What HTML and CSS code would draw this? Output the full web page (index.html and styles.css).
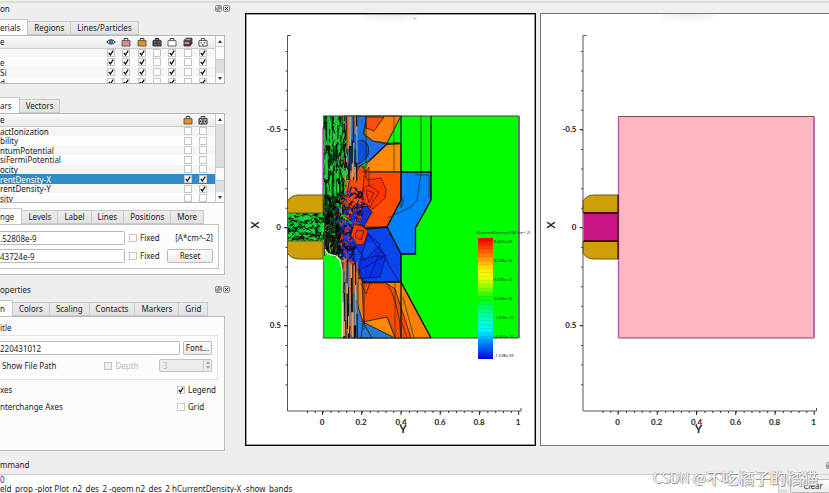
FILE: index.html
```html
<!DOCTYPE html>
<html lang="en">
<head>
<meta charset="utf-8">
<title>Plot_n2_des_2</title>
<link rel="stylesheet" href="styles.css">
</head>
<body>
<svg class="defs" aria-hidden="true">
  <defs>
    <symbol id="i-eye" viewBox="0 0 10 10"><path d="M.6 5Q5 .4 9.4 5Q5 9.2.6 5z" fill="#dce6ee" stroke="#2c4763" stroke-width="1"/><circle cx="5" cy="4.8" r="2" fill="#4f80a8" stroke="#24415f" stroke-width=".6"/></symbol>
    <symbol id="i-bag" viewBox="0 0 10 10"><path d="M3.2 3.6V1.5h3.6v2.1" fill="none" stroke="#333" stroke-width="1"/><path d="M1 3.6h8v5.4H1z" fill="currentColor" stroke="#444" stroke-width=".8"/></symbol>
    <symbol id="i-mesh" viewBox="0 0 10 10"><path d="M3.2 3.6V1.5h3.6v2.1M1 3.6h8v5.4H1z" fill="currentColor" stroke="#333" stroke-width="1"/><path d="M1 4l3 5 2-5 3 5M1 8.5l3-4.5 2 5 3-5M1 6.3h8" fill="none" stroke="#333" stroke-width=".7"/></symbol>
    <symbol id="i-box" viewBox="0 0 10 10"><path d="M1 3.5L3 1.2h6v5.6L7 9H1z" fill="#4a4448" stroke="#333" stroke-width=".8"/><path d="M1.6 5h4.6v2H1.6z" fill="#d9828c"/><path d="M2.6 2.6h4.8" stroke="#ddd" stroke-width=".7"/></symbol>
    <symbol id="i-dots" viewBox="0 0 10 10"><path d="M3.2 3.6V1.5h3.6v2.1M1 3.6h8v5.4H1z" fill="#fff" stroke="#444" stroke-width=".9"/><path d="M2.6 5.3h1.2v1.2H2.6zM6 5.3h1.2v1.2H6zM4.4 7h1.2v1.2H4.4z" fill="#333"/></symbol>
    <symbol id="i-float" viewBox="0 0 7 7"><rect x=".5" y=".5" width="6" height="6" rx="1.2" fill="#e4e4e4" stroke="#777" stroke-width=".8"/><path d="M3 1.8h2.2V4H3zM1.8 3v2.2H4" fill="none" stroke="#555" stroke-width=".7"/></symbol>
    <symbol id="i-close" viewBox="0 0 7 7"><rect x=".5" y=".5" width="6" height="6" rx="1.2" fill="#e0e0e0" stroke="#777" stroke-width=".8"/><path d="M2 2l3 3M5 2L2 5" stroke="#333" stroke-width="1"/></symbol>
    <g id="axes">
      <path d="M291 35.500h-3.500V411H521v-3" fill="none" stroke="#555" stroke-width="1"/>
      <path d="M307 412H519" stroke="#333" stroke-width="2" stroke-dasharray="1 6.840"/>
      <path d="M286.500 51V392" stroke="#444" stroke-width="2" stroke-dasharray="1 18.600"/>
      <path d="M322.500 411v4M361.700 411v4M401 411v4M440.200 411v4M479.500 411v4M518.700 411v4M287 129.500h-3M287 227.500h-3M287 325.500h-3" stroke="#333" stroke-width="1"/>
      <g class="tick" text-anchor="middle">
        <text x="322" y="425">0</text><text x="361" y="425">0.2</text><text x="401" y="425">0.4</text><text x="440" y="425">0.6</text><text x="479" y="425">0.8</text><text x="518" y="425">1</text>
      </g>
      <g class="tick" text-anchor="end">
        <text x="281" y="132">-0.5</text><text x="281" y="230">0</text><text x="281" y="328">0.5</text>
      </g>
      <text class="axis-name" x="403" y="433" text-anchor="middle">Y</text>
      <text class="axis-name" transform="translate(259 225) rotate(-90)" text-anchor="middle">X</text>
    </g>
    <path id="contacts" d="M323 195H299Q291 195 287.500 201V213H323zM323 241H287.500V253Q291 259 299 259H323z" fill="#cf9f08" stroke="#5e5a20" stroke-width="1"/>
  </defs>
</svg>

<div class="toolbar-edge"></div>
<main class="workspace">
  <aside class="sidebar">
    <header class="dock-title"><span>on</span><span class="dock-buttons"><button aria-label="Float"><svg><use href="#i-float"/></svg></button><button aria-label="Close"><svg><use href="#i-close"/></svg></button></span></header>
    <nav class="tabs"><button class="active">erials</button><button>Regions</button><button>Lines/Particles</button></nav>
    <section class="list materials">
      <div class="list-view">
      <table>
        <colgroup><col class="c-name"><col><col><col><col><col><col><col><col class="c-end"></colgroup>
        <thead><tr><th>e</th><th><svg><use href="#i-eye"/></svg></th><th class="pink"><svg><use href="#i-bag"/></svg></th><th class="amber"><svg><use href="#i-bag"/></svg></th><th class="dark"><svg><use href="#i-mesh"/></svg></th><th class="white"><svg><use href="#i-bag"/></svg></th><th><svg><use href="#i-box"/></svg></th><th><svg><use href="#i-dots"/></svg></th><th></th></tr></thead>
        <tbody id="materials"></tbody>
      </table>
      </div>
      <div class="scroll"><i class="up"></i><span class="thumb"></span><span class="trough"></span><i class="down"></i></div>
    </section>

    <nav class="tabs second"><button class="active">ars</button><button>Vectors</button></nav>
    <section class="list scalars">
      <div class="list-view">
      <table>
        <colgroup><col class="c-wide"><col><col><col class="c-end"></colgroup>
        <thead><tr><th>e</th><th class="amber"><svg><use href="#i-bag"/></svg></th><th class="white"><svg><use href="#i-mesh"/></svg></th><th></th></tr></thead>
        <tbody id="scalars"></tbody>
      </table>
      </div>
      <div class="scroll"><i class="up"></i><span class="trough"></span><span class="thumb"></span><span class="rest"></span><i class="down"></i></div>
    </section>
    <section class="pane range">
      <nav class="tabs"><button class="active">nge</button><button>Levels</button><button>Label</button><button>Lines</button><button>Positions</button><button>More</button></nav>
      <div class="range-body">
        <input type="text" value=".52808e-9" aria-label="Minimum">
        <label><input type="checkbox">Fixed</label>
        <span class="unit">[A*cm^-2]</span>
        <input type="text" value="43724e-9" aria-label="Maximum">
        <label><input type="checkbox">Fixed</label>
        <button class="btn">Reset</button>
      </div>
    </section>

    <header class="dock-title second"><span>operties</span><span class="dock-buttons"><button aria-label="Float"><svg><use href="#i-float"/></svg></button><button aria-label="Close"><svg><use href="#i-close"/></svg></button></span></header>
    <nav class="tabs"><button class="active">n</button><button>Colors</button><button>Scaling</button><button>Contacts</button><button>Markers</button><button>Grid</button></nav>
    <section class="pane props">
      <label for="title">itle</label>
      <div class="group">
        <div class="row"><input id="title" type="text" value="220431012"><button class="btn font">Font...</button></div>
        <div class="row path"><span class="show">Show File Path</span><label class="off"><input type="checkbox" disabled>Depth</label><span class="spin"><input type="text" value="3" disabled aria-label="Depth value"><span class="steps"><i class="up"></i><i class="down"></i></span></span></div>
      </div>
      <div class="option"><span>xes</span><label><input type="checkbox" checked>Legend</label></div>
      <div class="option"><span>nterchange Axes</span><label><input type="checkbox">Grid</label></div>
    </section>
  </aside>

  <section class="plots">
    <figure class="plot selected">
      <svg viewBox="246 14 289 431">
        <defs>
          <radialGradient id="veil" cx=".5" cy="0" r=".8"><stop offset="0" stop-color="#ececec"/><stop offset="1" stop-color="#fff"/></radialGradient>
          <linearGradient id="legend" x2="0" y2="1"><stop offset="0" stop-color="#f00000"/><stop offset=".08" stop-color="#ff4000"/><stop offset=".16" stop-color="#ff8c00"/><stop offset=".25" stop-color="#ffe600"/><stop offset=".32" stop-color="#f4ff00"/><stop offset=".42" stop-color="#80ff00"/><stop offset=".5" stop-color="#00ff00"/><stop offset=".58" stop-color="#00ff60"/><stop offset=".68" stop-color="#00ffc8"/><stop offset=".77" stop-color="#00f4ff"/><stop offset=".86" stop-color="#0090ff"/><stop offset=".94" stop-color="#0040f4"/><stop offset="1" stop-color="#0000e8"/></linearGradient>
          <clipPath id="c-left"><path d="M323 116H345L348 165 345 200 344 240 341 262 335 257 328 254 323 246z"/></clipPath>
          <clipPath id="c-gate"><path d="M288 213H325V241H288z"/></clipPath>
          <clipPath id="c-core"><path d="M325 210L340 198 352 186 362 190 366 205 360 222 363 240 354 250 355 266 346 262 330 252 325 235z"/></clipPath>
        </defs>
        <path d="M364 14H418V26H364z" fill="url(#veil)"/><circle cx="414.500" cy="18.500" r="1.200" fill="#ccc"/>
        <path d="M323 116H519V338H323z" fill="#00ff00"/>
        <g stroke="#102010" stroke-width=".8">
          <path d="M343 116H360V200H343z" fill="#d96a30"/>
          <path d="M341 256H362V338H341z" fill="#c98a58"/>
          <path d="M356 116H367L363 134 373 141 387 144 369 161 358 167 349 174 350 150z" fill="#1c70e8"/>
          <path d="M367 116H401L387 143 373 141 364 134z" fill="#ff7d08"/>
          <path d="M366 117H384L374 131 366 128z" fill="#ff4d10"/>
          <path d="M387 144H401V172H361L369 161z" fill="#ff8a08"/>
          <path d="M361 165L367 172H401V200L387 227 365 229 344 216 349 182z" fill="#ff4c00"/>
          <path d="M401 172H431V200L415.500 228V254H401L387 227 401 200z" fill="#0080ff"/>
          <path d="M365 227L387 227 401 254V282H362L354 265 338 252 340 222z" fill="#0a45ec"/>
          <path d="M358 268L362 282H401L431 338H358z" fill="#ff8000"/>
          <path d="M362 283H386L395 289 411 338H395L387 317 364 327z" fill="#ff4b00"/>
          <path d="M356 300L363 322 372 338H354zM363 322L397 338H361z" fill="#2878d8"/>
          <path d="M363 322L387 317 395 338z" fill="#ff8a08"/>
          <path d="M353 155Q354 139 363 140 371 145 368 155 362 165 355 164z" fill="#1050d0"/>
        </g>
        <path d="M401 116V200L387 227 401 254H415.500V228L431 200V116M401 172H431M401 254V282L431 338M362 282H401V338M387 144L401 143M365 229L387 227M369 161L387 144" fill="none" stroke="#111" stroke-width="1.300"/>
        <path d="M421 116V172L417 200 411 207 387 218M394 116V172M395 282V338M401 143H387L401 116M361 172H401M416 172V175H429V198M403 297L414 338M401 302V320L407 338M401 197V208L403 202V197" fill="none" stroke="#20300f" stroke-width=".7"/>
        <path d="M364 175L367 180 381 178 386 190 385 198 373 209 362 202zM364 188L369 185 379 192 370 207 361 199zM366 190L374 193 369 203zM363 165L365 174 369 167 369 187" fill="#ff2a08" fill-opacity=".6" stroke="#5e1400" stroke-width=".8"/>
        <path d="M355 208L367 206 372 212 364 226 350 221z" fill="#1030d8" stroke="#080830" stroke-width=".8"/>
        <path d="M368 234L382 253 386 255 380 277 359 279 360 261zM361 260L376 256 385 256 360 270 365 279M379 253L370 277M366 232L378 242 391 269 399 281M352 241L365 260 381 244" fill="#0820e0" fill-opacity=".5" stroke="#081068" stroke-width=".7"/>
        <path d="M366 116V178M356.500 116V182M364 283V330M361 283L366 294 370 283M386 282Q399 300 401 338M357 270Q364 285 371 282" fill="none" stroke="#222" stroke-width=".8"/>
        <g id="noise" fill="none" stroke-linejoin="round"></g>
        <path d="M354 224L362 226 368 231 364 244 357 245 351 235zM357 230l7 1-3 9-6-3z" fill="#ff3808" stroke="#401010" stroke-width=".8"/>
        <path d="M324 250L328 255 337 258 341 266V338H325z" fill="#00ff10"/>
        <path d="M325 249L328 254 336 256 340 260 342 270V338" fill="none" stroke="#e8ffe8" stroke-width="1.300"/>
        <path d="M323 128V195M323.500 262V338" stroke="#b040b8" stroke-width="1.300"/>
        <path d="M323 116H519V338H323M324.500 195V256" fill="none" stroke="#304030" stroke-width="1"/>
        <path d="M519 116V338" stroke="#75607a" stroke-width="1.500"/>
        <use href="#contacts"/>
        <use href="#axes"/>
        <path d="M478 238H493V359H478z" fill="url(#legend)"/>
        <path d="M485.500 240V359" stroke="#000" stroke-opacity=".07" stroke-width="15" stroke-dasharray="1 3"/>
        <text class="legend-title" x="476" y="234">hCurrentDensity-X (A*cm^-2)</text>
        <g class="legend-value"><text x="494" y="243">6.437e-09</text><text x="494" y="262">6.508e-10</text><text x="494" y="281">5.690e-12</text><text x="494" y="300">6.656e-13</text><text x="494" y="319">-1.526e-12</text><text x="494" y="338">-4.350e-10</text><text x="494" y="357">-1.528e-09</text></g>
      </svg>
    </figure>
    <figure class="plot">
      <svg viewBox="541 14 288 431">
        <path d="M662 14H716V25H662z" fill="url(#veil)"/>
        <path d="M618.500 116.500H814V338H618.500z" fill="#ffb6c1" stroke="#7e4a58" stroke-width="1"/>
        <path d="M618.500 116V338M814 116V338" stroke="#b55ab8" stroke-width="1.500"/>
        <g transform="translate(295.500 0)">
          <path d="M288 213H323V241H288z" fill="#c71585"/>
          <use href="#contacts"/>
          <path d="M288 213H323M288 241H323" stroke="#500018" stroke-width="2"/>
          <path d="M322.500 195V259" stroke="#501830" stroke-width="1.500"/>
          <use href="#axes"/>
        </g>
      </svg>
    </figure>
  </section>
</main>

<footer class="console">
  <header class="console-title"><span>mmand</span><button aria-label="Float"><svg><use href="#i-float"/></svg></button></header>
  <div class="console-body">
    <div class="log"><div class="result">0</div><div>eld_prop -plot Plot_n2_des_2 -geom n2_des_2 hCurrentDensity-X -show_bands</div></div>
    <div class="scroll"><i class="up"></i><span class="trough"></span></div>
    <button class="btn clear">Clear</button>
  </div>
  <div class="watermark"><span>CSDN @</span>不吃橘子的橘猫</div>
</footer>
<script src="app.js"></script>
</body>
</html>
```
FILE: styles.css
```css
* { box-sizing: border-box; }
body {
  margin: 0;
  min-height: 100vh;
  display: flex;
  flex-direction: column;
  overflow: hidden;
  background: #eeeeee;
  color: #222;
  font: 8px/10px "Noto Sans", "Noto Sans CJK SC", sans-serif;
}
button, input { font: inherit; color: inherit; }
button { padding: 0; border: 0; background: none; }
label { display: flex; align-items: center; gap: 3px; }
.defs { position: absolute; width: 0; height: 0; }

.toolbar-edge { height: 3px; border-bottom: 2px solid #dcdedc; }
.workspace { display: grid; grid-template-columns: 245px 1fr; }
.sidebar { padding-right: 20px; }

.dock-title { display: flex; justify-content: space-between; align-items: center; height: 11px; margin-bottom: 5px; }
.dock-title.second { margin-top: 9px; }
.dock-buttons { display: flex; gap: 1px; margin-right: -5px; }
.dock-buttons button, .dock-buttons svg, .console-title svg { display: block; width: 7px; height: 7px; }

.tabs { display: flex; align-items: flex-end; height: 16px; }
.tabs.second { margin-top: 13px; }
.tabs button {
  height: 14px;
  padding: 0 6px;
  border: 1px solid #c8c8c8;
  border-left: 0;
  background: linear-gradient(#ececec, #e2e2e2);
}
.tabs button.active { height: 16px; padding: 0 7px 0 0; border-bottom: 0; background: #fcfcfc; }

.list { display: flex; border: 1px solid #b8b8b8; border-left: 0; background: #fdfdfd; overflow: hidden; }
.materials { height: 49px; }
.scalars { height: 90px; }
.list-view { flex: 1; overflow: hidden; }
table { width: 100%; table-layout: fixed; border-collapse: collapse; }
.materials table { height: 51px; }
.scalars table { height: 89px; }
.c-name { width: 103px; }
.c-wide { width: 180px; }
.c-end { width: 4px; }
th, td { padding: 0; text-align: center; line-height: 9px; white-space: nowrap; }
th { height: 12px; background: linear-gradient(#fafafa, #e9e9e9); border-bottom: 1px solid #ccc; font-weight: normal; }
th:first-child, td:first-child { text-align: left; }
th svg { display: block; width: 10px; height: 10px; margin: auto; }
.pink { color: #dd8a92; }
.amber { color: #e5951a; }
.dark { color: #777; }
.white { color: #fff; }
tbody tr:nth-child(odd) { background: #f6f6f6; }
tbody tr.current { background: #308cc6; color: #fff; }

input[type="checkbox"] {
  appearance: none;
  display: block;
  width: 8px;
  height: 8px;
  margin: 0;
  border: 1px solid #c6c6c6;
  background: #fff;
}
td input[type="checkbox"] { margin: auto; }
input[type="checkbox"]:checked {
  background: #fff url("data:image/svg+xml,%3Csvg xmlns='http://www.w3.org/2000/svg' viewBox='0 0 6 6'%3E%3Cpath d='M.8 2.900L2.400 5 5.200.6' fill='none' stroke='%23111' stroke-width='1.300'/%3E%3C/svg%3E") center / 6px 6px no-repeat;
}

.scroll { display: flex; flex-direction: column; width: 9px; border-left: 1px solid #ccc; background: #fafafa; }
.up, .down { flex: none; height: 10px; display: grid; place-items: center; }
.up::after, .down::after { content: ""; border: 2px solid transparent; }
.up::after { border-top: 0; border-bottom: 3px solid #333; }
.down::after { border-bottom: 0; border-top: 3px solid #333; }
.trough { flex: 1; background: #dedede; }
.thumb { height: 14px; border: solid #ccc; border-width: 1px 0; background: #fafafa; }
.scalars .trough { flex: 43; }
.scalars .rest { flex: 11; background: #dedede; }

.pane { border: 1px solid #bcbcbc; border-left: 0; background: #fcfcfc; }
.range { border-top: 0; padding: 5px 5px 5px 0; }
.range-body {
  display: grid;
  grid-template-columns: 1fr 34px 46px;
  gap: 4px;
  padding: 6px 5px 5px 0;
  border: 1px solid #c4c4c4;
  border-left: 0;
  align-items: center;
}
input[type="text"] { width: 100%; min-width: 0; height: 14px; padding: 0; border: 1px solid #bbb; border-left: 0; border-radius: 0 2px 2px 0; background: #fff; }
.unit { text-align: right; }
.btn { height: 14px; border: 1px solid #bbb; border-radius: 2px; background: linear-gradient(#fff, #ececec); }

.props { min-height: 135px; padding: 6px 6px 0 0; }
.group { display: grid; gap: 4px; margin: 2px 0 5px; padding: 5px 5px 7px 0; border: 1px solid #e4e4e4; border-left: 0; }
.row { display: flex; align-items: center; gap: 3px; }
.font { flex: none; width: 29px; }
.path { justify-content: space-between; padding-left: 2px; }
.show { width: 98px; }
.off { color: #bbb; }
.off input { background: #eee; }
.spin { display: flex; width: 53px; margin-left: 16px; border: 1px solid #c2c2c2; border-radius: 2px; background: #ebebeb; color: #bbb; }
.spin input[type="text"] { height: 11px; padding-left: 3px; border: 0; background: none; }
.steps { width: 9px; border-left: 1px solid #ccc; }
.steps i { height: 5px; opacity: .4; }
.option { display: flex; justify-content: space-between; margin-bottom: 7px; }
.option label { width: 41px; }

.plots { display: grid; grid-template-columns: 291fr 289fr; gap: 4px; padding-top: 10px; align-items: start; }
.plot { margin: 0; border: 1px solid #777; border-right: 0; background: #fff; }
.plot.selected { border: 1px solid #000; outline: 1px solid #9a9a9a; outline-offset: -2px; }
.plot svg { display: block; width: 100%; height: auto; }
.tick { font: bold 8px Lato, sans-serif; fill: #222; }
.axis-name { font: bold 11px Lato, sans-serif; fill: #222; }
.legend-title { font: 4px "Noto Sans", sans-serif; fill: #123; }
.legend-value { font: 4px "Noto Sans", sans-serif; fill: #021; }

.console { position: relative; flex: 1; display: flex; flex-direction: column; }
.console-title { display: flex; justify-content: space-between; align-items: center; height: 23px; padding-top: 5px; margin-right: -4px; }
.console-body { flex: 1; display: flex; border-top: 1px solid #d0d0d0; }
.log { flex: 1; background: #fff; line-height: 9px; }
.result { color: #22228a; }
.console-body .scroll { margin-top: 4px; }
.clear { width: 42px; margin: 4px -3px 0 3px; padding-left: 4px; }
.watermark {
  position: absolute;
  right: 11px;
  top: 14px;
  display: flex;
  align-items: center;
  font: 16px/24px "Noto Sans CJK SC", sans-serif;
  color: #f2f2f2;
  text-shadow: 1px 1px 0 #999, -1px 0 0 #bbb;
  pointer-events: none;
}
.watermark span { font-size: 14px; white-space: pre; }
```
FILE: app.js
```js
// List contents: 1 = ticked, 0 = clear.
const materials = [['', '1110101'], ['e', '1110101'], ['Si', '1110101'], ['d', '1110101']];
const scalars = [
  ['actIonization', '00'], ['bility', '00'], ['ntumPotential', '00'], ['siFermiPotential', '00'],
  ['ocity', '00'], ['rentDensity-X', '11'], ['rentDensity-Y', '01'], ['sity', '00']
];
function fill(id, rows, current) {
  document.getElementById(id).innerHTML = rows.map(([name, flags], i) =>
    `<tr${i === current ? ' class="current"' : ''}><td>${name}</td>` +
    [...flags].map(f => `<td><input type="checkbox" aria-label="${name}"${f === '1' ? ' checked' : ''}></td>`).join('') +
    '<td></td></tr>').join('');
}
fill('materials', materials, -1);
fill('scalars', scalars, 5);

// Densely packed contour lines around the junction.
let seed = 7;
const rnd = () => (seed = (seed * 16807) % 2147483647) / 2147483647;
const noise = document.getElementById('noise');
function scatter(clip, x, y, w, h, count, colors, dx, dy, width) {
  let out = '';
  for (let i = 0; i < count; i++) {
    let d = `M${(x + rnd() * w).toFixed(1)} ${(y + rnd() * h).toFixed(1)}`;
    for (let k = 0; k < 3; k++) d += `l${((rnd() - .5) * dx).toFixed(1)} ${((rnd() - .5) * dy).toFixed(1)}`;
    out += `<path d="${d}" stroke="${colors[i % colors.length]}" stroke-width="${width}"/>`;
  }
  noise.insertAdjacentHTML('beforeend', `<g clip-path="url(#${clip})">${out}</g>`);
}
function stripes(x0, x1, y0, y1, colors) {
  let out = '', i = 0;
  for (let x = x0; x < x1; x += 1.4) {
    let y = y0;
    while (y < y1) {
      const len = 8 + rnd() * 34, end = Math.min(y1, y + len);
      out += `<path d="M${x} ${y}L${x + rnd() - .5} ${end}" stroke="${colors[i++ % colors.length]}" stroke-width="1.2"/>`;
      y = end;
    }
  }
  noise.insertAdjacentHTML('beforeend', out);
}
stripes(324, 345, 116, 215, ['#0c2a10', '#1aaa35', '#041008', '#30c050', '#0a1a0a', '#123a18', '#28b048']);
stripes(344, 357, 116, 180, ['#101010', '#e07838', '#2058c0', '#181818', '#e8905a', '#3a1a10', '#58b8c8']);
stripes(343, 357, 262, 338, ['#101010', '#e8a070', '#101010', '#f06030', '#3a70a0', '#101810']);
scatter('c-left', 323, 116, 24, 145, 170, ['#03140a', '#0a0a0a', '#20d048', '#28c850'], 4, 12, 1);
scatter('c-core', 323, 186, 44, 80, 420, ['#e02a18', '#101040', '#1838d8', '#180810', '#c83020', '#0c2090', '#0a0a18'], 7, 7, 1.1);
scatter('c-left', 324, 196, 15, 60, 130, ['#000', '#051008', '#103a18'], 6, 9, 1.4);
noise.insertAdjacentHTML('beforeend', '<path d="M288 213H323V241H288z" fill="#12d038"/>');
scatter('c-gate', 288, 213, 36, 28, 190, ['#041408', '#062010', '#041408', '#10e840'], 6, 4, 1);
```
